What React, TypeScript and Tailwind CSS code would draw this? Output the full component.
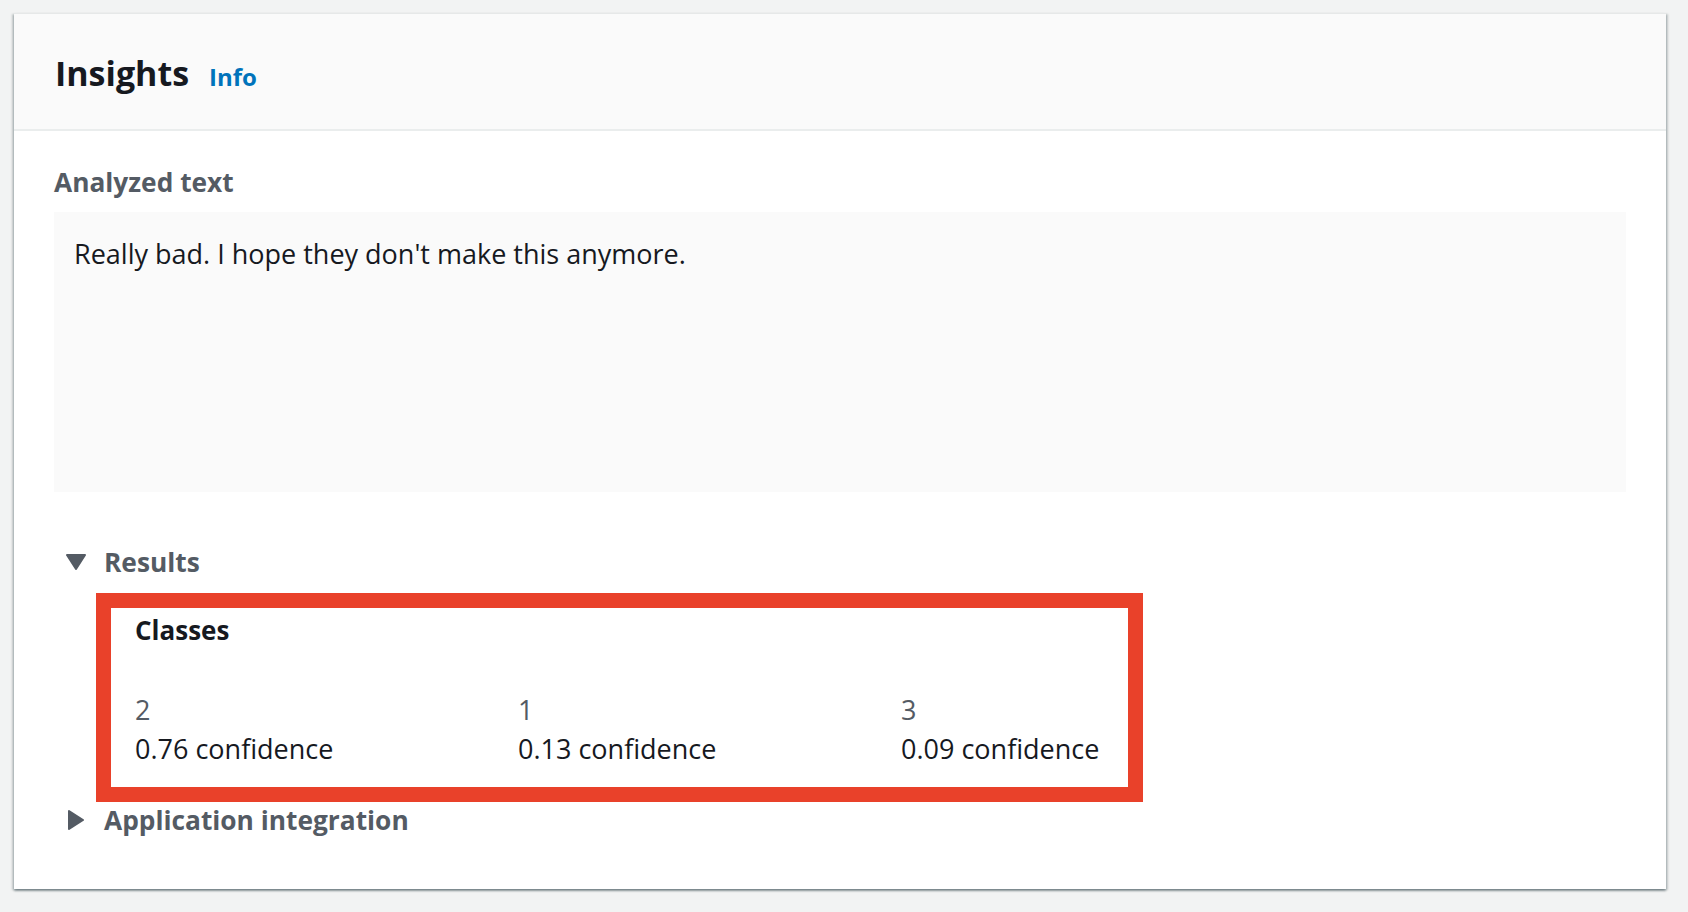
import React from "react";

const font = { fontFamily: '"Open Sans", "Noto Sans", sans-serif' };

function CaretDown() {
  return (
    <svg width="20" height="16" viewBox="0 0 20 16" className="block">
      <polygon points="1,1 19,1 10,15" fill="#545b64" stroke="#545b64" strokeWidth="2" strokeLinejoin="round" />
    </svg>
  );
}

function CaretRight() {
  return (
    <svg width="16" height="20" viewBox="0 0 16 20" className="block">
      <polygon points="1,1 15,10 1,19" fill="#545b64" stroke="#545b64" strokeWidth="2" strokeLinejoin="round" />
    </svg>
  );
}

const classes = [
  { label: "2", conf: "0.76 confidence" },
  { label: "1", conf: "0.13 confidence" },
  { label: "3", conf: "0.09 confidence" },
];

export default function App() {
  return (
    <div className="w-[1688px] h-[912px] bg-[#f2f3f3] pt-[13px] pl-[14px] overflow-hidden" style={font}>
      <div className="w-[1652px] bg-white border-t border-[#e6e8e8] shadow-[0_2px_2px_0_rgba(0,28,36,0.35),2px_1px_2px_0_rgba(0,28,36,0.18),-2px_1px_2px_0_rgba(0,28,36,0.18)]">
        <div className="h-[117px] bg-[#fafafa] border-b-2 border-[#eaeded] pl-[41px] pt-[37px] flex items-baseline gap-[20px]">
          <h2 className="text-[34px] leading-[44px] font-bold text-[#16191f]">Insights</h2>
          <span className="text-[24px] leading-[44px] font-bold text-[#0073bb]">Info</span>
        </div>
        <div className="px-[40px] pt-[33px] pb-[51px]">
          <div className="text-[26.3px] leading-[36px] font-bold text-[#545b64]">Analyzed text</div>
          <div className="mt-[12px] h-[280px] bg-[#fafafa] px-[20px] pt-[24px]">
            <p className="text-[27px] leading-[36px] text-[#16191f]">Really bad. I hope they don't make this anymore.</p>
          </div>
          <div className="mt-[52px] flex items-center h-[36px] pl-[12px] gap-[18px]">
            <div className="w-[20px] flex justify-center">
              <CaretDown />
            </div>
            <span className="text-[26.3px] leading-[36px] font-bold text-[#545b64]">Results</span>
          </div>
          <div className="mt-[13px] ml-[42px] w-[1047px] border-[15px] border-[#e9412a] pt-[4px] pb-[20px] pl-[24px]">
            <div className="text-[26px] leading-[36px] font-bold text-[#16191f]">Classes</div>
            <div className="mt-[44px] grid grid-cols-[383px_383px_383px] w-[1149px]">
              {classes.map((c) => (
                <div key={c.label} className="flex flex-col">
                  <span className="text-[27px] leading-[36px] text-[#545b64]">{c.label}</span>
                  <span className="mt-[3px] text-[27px] leading-[36px] text-[#16191f] whitespace-nowrap">{c.conf}</span>
                </div>
              ))}
            </div>
          </div>
          <div className="flex items-center h-[36px] pl-[12px] gap-[18px]">
            <div className="w-[20px] flex justify-center">
              <CaretRight />
            </div>
            <span className="text-[26.3px] leading-[36px] font-bold text-[#545b64]">Application integration</span>
          </div>
        </div>
      </div>
    </div>
  );
}
